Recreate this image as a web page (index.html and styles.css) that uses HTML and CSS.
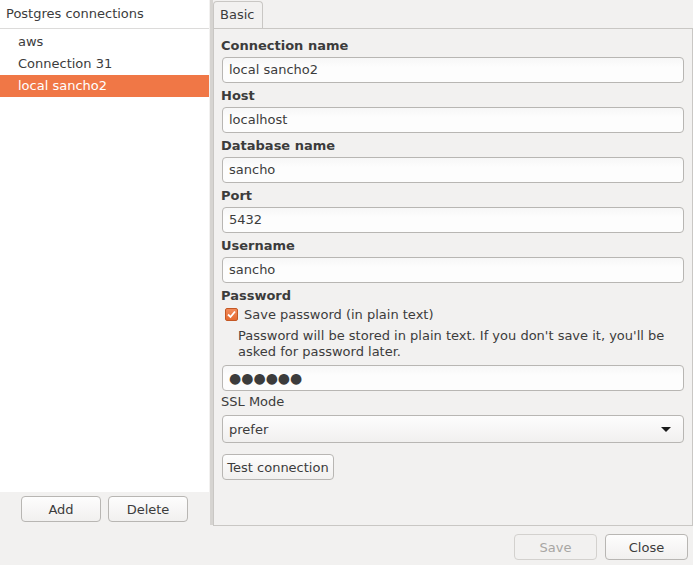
FILE: index.html
```html
<!DOCTYPE html>
<html>
<head>
<meta charset="utf-8">
<link rel="stylesheet" href="styles.css">
</head>
<body>
<div class="window">
  <div class="main">
    <div class="sidebar">
      <div class="list">
        <div class="list-header">Postgres connections</div>
        <div class="list-items">
          <div class="item">aws</div>
          <div class="item">Connection 31</div>
          <div class="item selected">local sancho2</div>
        </div>
      </div>
      <div class="sidebar-buttons">
        <button class="btn btn-side">Add</button>
        <button class="btn btn-side">Delete</button>
      </div>
    </div>
    <div class="splitter"></div>
    <div class="content">
      <div class="tabs"><div class="tab">Basic</div></div>
      <div class="pane">
        <div class="label">Connection name</div>
        <div class="input">local sancho2</div>
        <div class="label">Host</div>
        <div class="input">localhost</div>
        <div class="label">Database name</div>
        <div class="input">sancho</div>
        <div class="label">Port</div>
        <div class="input">5432</div>
        <div class="label">Username</div>
        <div class="input">sancho</div>
        <div class="label label-tight">Password</div>
        <div class="check-row">
          <span class="checkbox"><svg width="11" height="11" viewBox="0 0 11 11"><path d="M2 5.5 L4.5 8 L9 2.5" fill="none" stroke="#fff" stroke-width="1.8"/></svg></span>
          <span>Save password (in plain text)</span>
        </div>
        <div class="help">Password will be stored in plain text. If you don't save it, you'll be asked for password later.</div>
        <div class="input input-pass">●●●●●●</div>
        <div class="label-normal">SSL Mode</div>
        <div class="select"><span>prefer</span><span class="arrow"></span></div>
        <div class="test-row"><button class="btn btn-test">Test connection</button></div>
      </div>
    </div>
  </div>
  <div class="footer">
    <button class="btn btn-foot disabled">Save</button>
    <button class="btn btn-foot">Close</button>
  </div>
</div>
</body>
</html>
```
FILE: styles.css
```css
* { box-sizing: border-box; }
html, body { margin: 0; padding: 0; }
body {
  width: 693px;
  height: 565px;
  background: #f2f1f0;
  font-family: "DejaVu Sans", sans-serif;
  font-size: 13px;
  color: #3c3c3c;
  overflow: hidden;
}
.window { display: flex; flex-direction: column; height: 565px; }
.main { display: flex; height: 526px; }
.sidebar { width: 210px; display: flex; flex-direction: column; }
.list { flex: 1; background: #fff; width: 209px; }
.list-header {
  height: 29px;
  line-height: 28px;
  padding-left: 6px;
  border-bottom: 1px solid #dcdbda;
}
.list-items { padding-top: 2px; }
.item { height: 22px; line-height: 22px; padding-left: 18px; }
.item.selected { background: #f07746; color: #fff; }
.sidebar-buttons {
  height: 34px;
  display: flex;
  justify-content: center;
  gap: 7px;
  padding-top: 4px;
  width: 209px;
}
.btn {
  font-family: "DejaVu Sans", sans-serif;
  font-size: 13px;
  color: #3c3c3c;
  background: linear-gradient(#fdfdfd, #f1f0ef);
  border: 1px solid #b8b6b3;
  border-radius: 4px;
  padding: 0;
  height: 26px;
}
.btn-side { width: 80px; }
.splitter { width: 3px; background: #d6d4d1; margin-bottom: 1px; }
.content { flex: 1; display: flex; flex-direction: column; }
.tabs { height: 28px; display: flex; align-items: flex-end; }
.tab {
  width: 50px;
  height: 27px;
  border: 1px solid #c9c7c4;
  border-bottom: none;
  border-radius: 4px 4px 0 0;
  padding-left: 6px;
  line-height: 26px;
  background: #f2f1f0;
}
.pane {
  flex: 1;
  border: 1px solid #c9c7c4;
  padding: 7px 8px 0 7px;
  display: flex;
  flex-direction: column;
}
.label { font-weight: bold; height: 18px; line-height: 20px; margin-bottom: 3px; }
.label.label-tight { margin-bottom: 0; }
.label-normal { height: 18px; line-height: 18px; margin-bottom: 4px; margin-top: -1px; }
.input {
  height: 26px;
  margin-left: 1px;
  margin-bottom: 3px;
  border: 1px solid #b8b6b3;
  border-radius: 4px;
  background: linear-gradient(#f7f7f7, #fdfdfd 40%);
  padding-left: 6px;
  line-height: 24px;
}
.input-pass { font-size: 14px; padding-left: 6px; margin-top: 5px; }
.check-row { display: flex; align-items: center; height: 20px; padding-left: 4px; gap: 6px; }
.checkbox {
  width: 13px; height: 13px;
  border: 1px solid #c45824;
  border-radius: 2px;
  background: linear-gradient(#f28a5a, #e56a30);
  display: flex; align-items: center; justify-content: center;
}
.help { padding-left: 17px; line-height: 16px; margin-top: 4px; }
.select {
  height: 28px;
  margin-left: 1px;
  border: 1px solid #b8b6b3;
  border-radius: 4px;
  background: linear-gradient(#fdfdfd, #f1f0ef);
  padding-left: 6px;
  padding-right: 12px;
  display: flex;
  align-items: center;
  justify-content: space-between;
}
.arrow {
  width: 0; height: 0;
  border-left: 5px solid transparent;
  border-right: 5px solid transparent;
  border-top: 5px solid #1a1a1a;
}
.test-row { margin-top: 11px; margin-left: 1px; }
.btn-test { width: 112px; }
.footer {
  height: 39px;
  display: flex;
  justify-content: flex-end;
  gap: 8px;
  padding-top: 8px;
  padding-right: 5px;
}
.btn-foot { width: 83px; }
.btn-foot.disabled { color: #a8a6a3; border-color: #d3d1ce; background: #f2f1f0; }
```
